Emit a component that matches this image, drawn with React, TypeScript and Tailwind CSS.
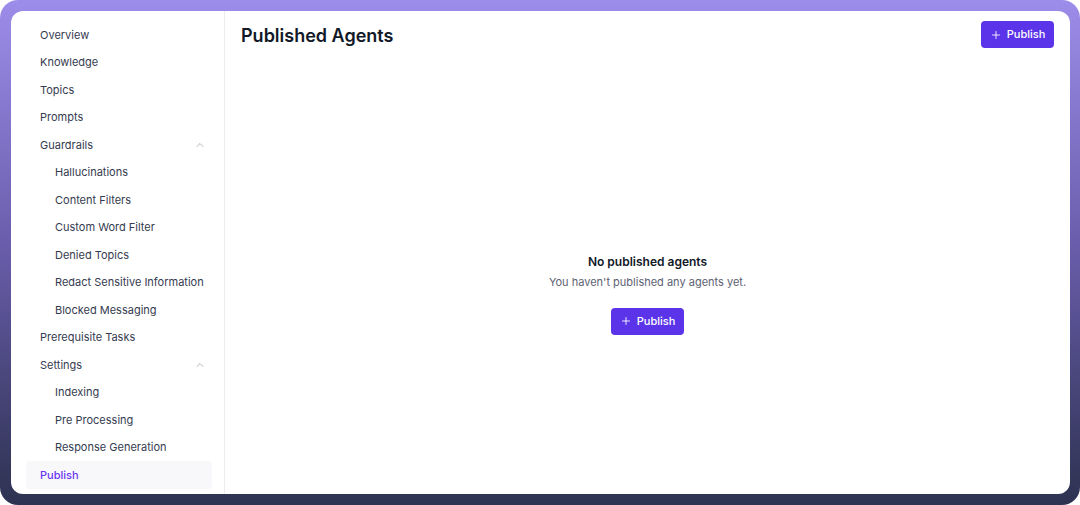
import { ChevronUp, Plus } from 'lucide-react'

type NavItem = {
  label: string
  sub?: boolean
  open?: boolean
  active?: boolean
}

const nav: NavItem[] = [
  { label: 'Overview' },
  { label: 'Knowledge' },
  { label: 'Topics' },
  { label: 'Prompts' },
  { label: 'Guardrails', open: true },
  { label: 'Hallucinations', sub: true },
  { label: 'Content Filters', sub: true },
  { label: 'Custom Word Filter', sub: true },
  { label: 'Denied Topics', sub: true },
  { label: 'Redact Sensitive Information', sub: true },
  { label: 'Blocked Messaging', sub: true },
  { label: 'Prerequisite Tasks' },
  { label: 'Settings', open: true },
  { label: 'Indexing', sub: true },
  { label: 'Pre Processing', sub: true },
  { label: 'Response Generation', sub: true },
  { label: 'Publish', active: true },
]

function PublishButton() {
  return (
    <button className="flex h-[27px] w-[73px] items-center justify-center gap-[5px] rounded-[4px] bg-[#5b34e9] text-[11px] font-medium text-white">
      <Plus size={12} strokeWidth={1.75} />
      Publish
    </button>
  )
}

export default function App() {
  return (
    <div className="h-[505px] w-[1080px] bg-white" style={{ fontFamily: 'Inter, "Noto Sans", sans-serif' }}>
      <div className="h-full w-full rounded-[18px] bg-gradient-to-b from-[#9d8dea] via-[#685ca9] to-[#2d3251] p-[11px] pr-[10px]">
        <div className="flex h-full overflow-hidden rounded-[12px] bg-white">
          {/* Sidebar */}
          <aside className="w-[214px] shrink-0 border-r border-[#ececf1] pl-[15px] pr-[12px] pt-[10px]">
            {nav.map((item) => (
              <div
                key={item.label}
                className={
                  'flex h-[27.5px] items-center justify-between whitespace-nowrap rounded-[4px] pr-[6px] text-[11px] ' +
                  (item.sub ? 'pl-[29px] ' : 'pl-[14px] ') +
                  (item.active ? 'bg-[#f8f8fb] font-medium text-[#6b36f0]' : 'text-[#353b50]')
                }
              >
                <span>{item.label}</span>
                {item.open && <ChevronUp size={12} className="text-[#9a9fad]" strokeWidth={1.5} />}
              </div>
            ))}
          </aside>

          {/* Main */}
          <main className="flex flex-1 flex-col">
            <div className="flex h-[37px] items-start justify-between pl-4 pr-4 pt-[10px]">
              <h1 className="pt-[1px] text-[18px] leading-[27px] font-semibold text-[#111827]">Published Agents</h1>
              <PublishButton />
            </div>

            <div className="flex flex-1 flex-col items-center justify-center pt-[45px]">
              <h2 className="text-[12px] leading-[18px] font-semibold text-[#111827]">No published agents</h2>
              <p className="mt-[3px] text-[11px] leading-[16px] text-[#5d6272]">You haven't published any agents yet.</p>
              <div className="mt-[18px]">
                <PublishButton />
              </div>
            </div>
          </main>
        </div>
      </div>
    </div>
  )
}
